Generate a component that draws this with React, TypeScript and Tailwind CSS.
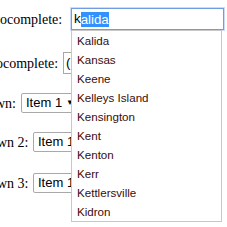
import React from "react";

const towns = [
  "Kalida",
  "Kansas",
  "Keene",
  "Kelleys Island",
  "Kensington",
  "Kent",
  "Kenton",
  "Kerr",
  "Kettlersville",
  "Kidron",
];

const label = "whitespace-nowrap text-[14px] text-black [font-family:'Liberation_Serif',serif]";
const ui = "[font-family:'Liberation_Sans',Arial,sans-serif]";

function Select() {
  return (
    <div
      className={`flex h-[20px] w-[56px] shrink-0 items-center justify-between rounded-[2px] border border-[#a9a9a9] bg-white pl-[4px] pr-[2px] text-[13px] text-black ${ui}`}
    >
      <span>Item 1</span>
      <span className="text-[8px]">▼</span>
    </div>
  );
}

export default function App() {
  return (
    <div className="relative h-[227px] w-[227px] overflow-hidden bg-white">
      <div className="flex flex-col pt-[8px]">
        <div className="flex h-[22px] items-center">
          <span className={`${label} w-[71px] shrink-0`}>ocomplete:</span>
          <div
            className={`flex h-[22px] w-[153px] shrink-0 items-center border border-[#6f9de4] pl-[2px] text-[13.3px] text-black shadow-[0_0_0_1px_#cadcf6] ${ui}`}
          >
            <span>k</span>
            <span className="bg-[#3390ff] leading-[15px] text-white">alida</span>
          </div>
        </div>

        <div className="mt-[22px] flex h-[22px] items-center">
          <span className={`${label} ml-[-4px] w-[67px] shrink-0`}>ocomplete:</span>
          <div
            className={`flex h-[22px] w-[153px] shrink-0 items-center border border-[#a9a9a9] pl-[2px] text-[13.3px] text-black ${ui}`}
          >
            (
          </div>
        </div>

        <div className="mt-[19px] flex h-[20px] items-center">
          <span className={`${label} ml-[-5px] w-[26px] shrink-0`}>wn:</span>
          <Select />
        </div>

        <div className="mt-[19px] flex h-[20px] items-center">
          <span className={`${label} ml-[-3px] w-[36px] shrink-0`}>wn 2:</span>
          <Select />
        </div>

        <div className="mt-[21px] flex h-[20px] items-center">
          <span className={`${label} ml-[-3px] w-[36px] shrink-0`}>wn 3:</span>
          <Select />
        </div>
      </div>

      <ul
        className={`absolute left-[71px] top-[30px] w-[151px] border border-[#c8c8c8] bg-white ${ui}`}
      >
        {towns.map((t) => (
          <li
            key={t}
            className="flex h-[19px] items-center pl-[5px] text-[11.6px] text-[#3a0c0c]"
          >
            {t}
          </li>
        ))}
      </ul>
    </div>
  );
}
